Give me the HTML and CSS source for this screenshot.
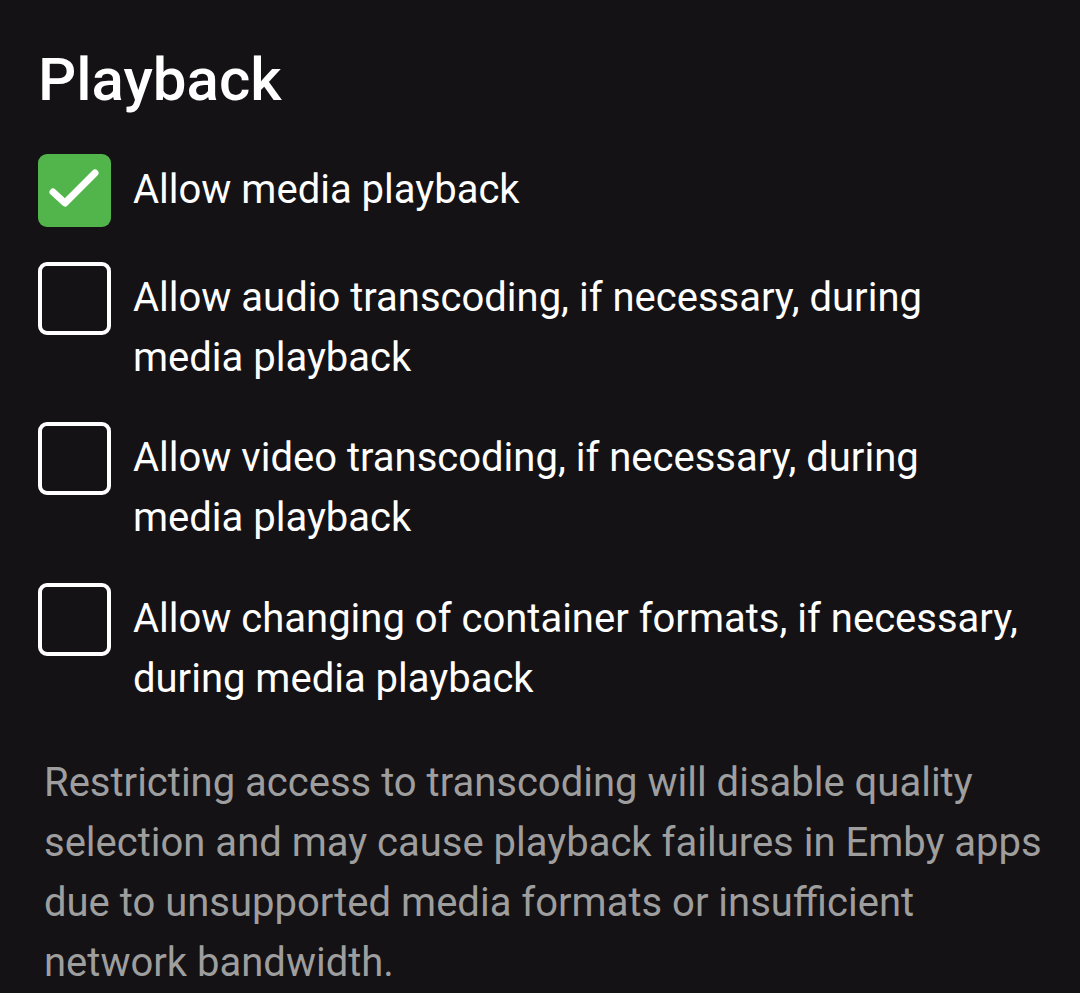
FILE: index.html
```html
<!DOCTYPE html>
<html lang="en">
<head>
  <meta charset="UTF-8" />
  <meta name="viewport" content="width=device-width, initial-scale=1.0"/>
  <title>Playback</title>
  <link rel="stylesheet" href="styles.css">
</head>
<body>
  <div class="section">
    <h2>Playback</h2>

    <label class="check-row">
      <span class="box checked">
        <svg viewBox="0 0 73 73" width="73" height="73"><path d="M15 38l12 11L57 19" fill="none" stroke="#fff" stroke-width="7" stroke-linecap="round" stroke-linejoin="round"/></svg>
      </span>
      <span class="label">Allow media playback</span>
    </label>

    <label class="check-row">
      <span class="box"></span>
      <span class="label">Allow audio transcoding, if necessary, during media playback</span>
    </label>

    <label class="check-row">
      <span class="box"></span>
      <span class="label">Allow video transcoding, if necessary, during media playback</span>
    </label>

    <label class="check-row">
      <span class="box"></span>
      <span class="label">Allow changing of container formats, if necessary, during media playback</span>
    </label>

    <p class="note">Restricting access to transcoding will disable quality selection and may cause playback failures in Emby apps due to unsupported media formats or insufficient network bandwidth.</p>
  </div>
</body>
</html>
```

FILE: styles.css
```css
body {
  margin: 0;
  background: #141215;
  color: #fff;
  font-family: Roboto, "Noto Sans", sans-serif;
}
.section {
  padding: 40px 36px 0 38px;
}
.section h2 {
  margin: 0 0 34px;
  font-size: 60px;
  font-weight: 500;
  line-height: 80px;
}
.check-row {
  display: flex;
  align-items: flex-start;
  margin-bottom: 34.5px;
}
.box {
  flex: none;
  width: 73px;
  height: 73px;
  box-sizing: border-box;
  border: 4px solid #fff;
  border-radius: 9px;
  display: flex;
  align-items: center;
  justify-content: center;
}
.box.checked {
  background: #52b54b;
  border: none;
}
.label {
  padding: 6px 16px 0 0;
  margin-left: 22px;
  font-size: 40px;
  line-height: 60px;
}
.note {
  margin: 44px 0 0 6px;
  color: #9e9e9e;
  font-size: 40px;
  line-height: 60px;
}
```
